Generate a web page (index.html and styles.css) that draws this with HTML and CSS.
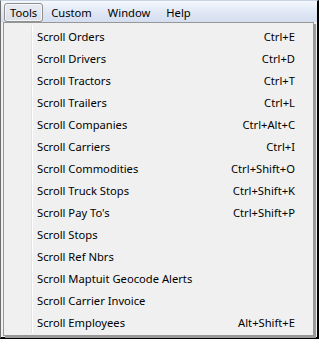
FILE: index.html
```html
<!DOCTYPE html>
<html>
<head>
<meta charset="utf-8">
<link rel="stylesheet" href="styles.css">
</head>
<body>
<div class="frame">
  <div class="menubar">
    <span class="top-item active">Tools</span>
    <span class="top-item">Custom</span>
    <span class="top-item">Window</span>
    <span class="top-item">Help</span>
  </div>
  <div class="dropdown">
    <div class="row"><span>Scroll Orders</span><span>Ctrl+E</span></div>
    <div class="row"><span>Scroll Drivers</span><span>Ctrl+D</span></div>
    <div class="row"><span>Scroll Tractors</span><span>Ctrl+T</span></div>
    <div class="row"><span>Scroll Trailers</span><span>Ctrl+L</span></div>
    <div class="row"><span>Scroll Companies</span><span>Ctrl+Alt+C</span></div>
    <div class="row"><span>Scroll Carriers</span><span>Ctrl+I</span></div>
    <div class="row"><span>Scroll Commodities</span><span>Ctrl+Shift+O</span></div>
    <div class="row"><span>Scroll Truck Stops</span><span>Ctrl+Shift+K</span></div>
    <div class="row"><span>Scroll Pay To's</span><span>Ctrl+Shift+P</span></div>
    <div class="row"><span>Scroll Stops</span><span></span></div>
    <div class="row"><span>Scroll Ref Nbrs</span><span></span></div>
    <div class="row"><span>Scroll Maptuit Geocode Alerts</span><span></span></div>
    <div class="row"><span>Scroll Carrier Invoice</span><span></span></div>
    <div class="row"><span>Scroll Employees</span><span>Alt+Shift+E</span></div>
  </div>
</div>
</body>
</html>
```
FILE: styles.css
```css
html, body {
  margin: 0;
  padding: 0;
  background: #ffffff;
}
.frame {
  position: relative;
  box-sizing: border-box;
  width: 319px;
  height: 339px;
  border-left: 1px solid #6d6d6d;
  border-top: 1px solid #c9d3e6;
  border-right: 2px solid #000;
  border-bottom: 2px solid #000;
  background: #f0f0f0;
  font-family: "Noto Sans", "DejaVu Sans", sans-serif;
  font-size: 11.2px;
  color: #000;
}
.menubar {
  height: 21px;
  display: flex;
  align-items: stretch;
  padding-left: 3px;
  background: linear-gradient(#f5f8fd, #dfe7f5 55%, #d5def0);
}
.top-item {
  display: flex;
  align-items: center;
  padding: 0 7px;
  margin-top: 2px;
  border: 1px solid transparent;
  border-radius: 3px;
  line-height: 1;
}
.top-item.active {
  border-color: #8e8f8f;
  background: linear-gradient(#e9ecf2, #dadfe8);
  box-shadow: inset 0 0 0 1px #f5f7fa;
  padding: 0 5px 0 5px;
}
.dropdown {
  position: absolute;
  left: 2px;
  top: 21px;
  width: 311px;
  height: 314px;
  box-sizing: border-box;
  border: 1px solid #979797;
  background: #f0f0f0;
  padding: 2px 2px;
  box-shadow: 2px 2px 0 #9a9a9a;
}
.dropdown::before {
  content: "";
  position: absolute;
  left: 27px;
  top: 2px;
  bottom: 2px;
  width: 1px;
  background: #e2e3e3;
  border-right: 1px solid #ffffff;
}
.row {
  height: 22px;
  display: flex;
  align-items: center;
  justify-content: space-between;
  padding-left: 31px;
  padding-right: 16px;
}
```
